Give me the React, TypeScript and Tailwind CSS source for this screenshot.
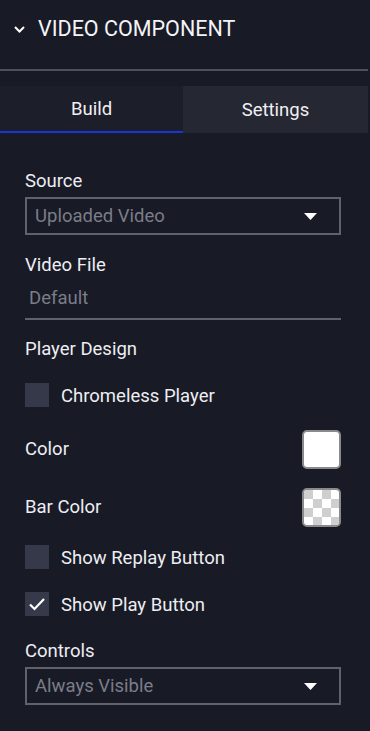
import React from "react";

function Caret() {
  return (
    <svg width="13" height="7" viewBox="0 0 13 7">
      <path d="M0 0 L13 0 L6.5 7 Z" fill="#ffffff" />
    </svg>
  );
}

function Select({ value }: { value: string }) {
  return (
    <div className="h-[38px] border-2 border-[#5f616b] flex items-center justify-between pl-[8px] pr-[22px]">
      <span className="text-[18.5px] text-[#7b7d88] mt-[2px]">{value}</span>
      <Caret />
    </div>
  );
}

function Checkbox({ checked, label }: { checked?: boolean; label: string }) {
  return (
    <div className="flex items-center h-[24px]">
      <div className="w-[24px] h-[24px] bg-[#363949] flex items-center justify-center">
        {checked && (
          <svg width="18" height="14" viewBox="0 0 18 14">
            <path d="M2 7.5 L6.5 12 L16 2" fill="none" stroke="#ffffff" strokeWidth="2.2" />
          </svg>
        )}
      </div>
      <span className="ml-[12px] text-[18.5px] text-[#eeeef2] mt-[3px]">{label}</span>
    </div>
  );
}

function Checker() {
  const cells = [];
  for (let r = 0; r < 5; r++) {
    for (let c = 0; c < 5; c++) {
      if ((r + c) % 2 === 0) cells.push(<rect key={`${r}-${c}`} x={c * 9} y={r * 9} width="9" height="9" fill="#cfcfcf" />);
    }
  }
  return (
    <div className="w-[39px] h-[39px] rounded-[5px] border-2 border-[#8a8a8a] overflow-hidden bg-white">
      <svg width="39" height="39" viewBox="0 0 39 39">{cells}</svg>
    </div>
  );
}

export default function App() {
  return (
    <div className="w-[370px] h-[731px] bg-[#181a26] overflow-hidden" style={{ fontFamily: "Roboto, 'Liberation Sans', sans-serif" }}>
      <div className="h-[69px] flex items-center pl-[14px] pr-[2px] pb-[11px]">
        <svg width="11" height="7" viewBox="0 0 11 7">
          <path d="M1 1 L5.5 5.5 L10 1" fill="none" stroke="#ffffff" strokeWidth="2" />
        </svg>
        <span className="ml-[13px] text-[21.5px] text-[#f4f4f6] mt-[1px]">VIDEO COMPONENT</span>
      </div>
      <div className="h-[2px] bg-[#4e5059] mr-[2px]" />
      <div className="mt-[15px] h-[47px] flex mr-[2px]">
        <div className="w-[183px] bg-[#1c1e2a] border-b-[2px] border-[#1736d6] flex items-center justify-center text-[18.5px] text-[#f0f0f3] pt-[3px]">
          Build
        </div>
        <div className="flex-1 bg-[#252733] flex items-center justify-center text-[18.5px] text-[#f0f0f3] pt-[3px]">
          Settings
        </div>
      </div>

      <div className="pl-[25px] pr-[29px] flex flex-col">
        <div className="mt-[38px] h-[20px] flex items-center text-[18.5px] text-[#eeeef2] pt-[2px]">Source</div>
        <div className="mt-[6px]">
          <Select value="Uploaded Video" />
        </div>
        <div className="mt-[20px] h-[20px] flex items-center text-[18.5px] text-[#eeeef2] pt-[2px]">Video File</div>
        <div className="mt-[1px] h-[44px] border-b-2 border-[#5f616b] flex items-center pl-[4px] pt-[4px] text-[18.5px] text-[#7b7d88]">
          Default
        </div>
        <div className="mt-[19px] h-[20px] flex items-center text-[18.5px] text-[#eeeef2] pt-[2px]">Player Design</div>
        <div className="mt-[24px]">
          <Checkbox label="Chromeless Player" />
        </div>
        <div className="mt-[23px] flex items-center justify-between">
          <span className="text-[18.5px] text-[#eeeef2]">Color</span>
          <div className="w-[39px] h-[39px] rounded-[5px] border-2 border-[#8a8a8a] bg-white" />
        </div>
        <div className="mt-[19px] flex items-center justify-between">
          <span className="text-[18.5px] text-[#eeeef2]">Bar Color</span>
          <Checker />
        </div>
        <div className="mt-[18px]">
          <Checkbox label="Show Replay Button" />
        </div>
        <div className="mt-[23px]">
          <Checkbox checked label="Show Play Button" />
        </div>
        <div className="mt-[25px] h-[20px] flex items-center text-[18.5px] text-[#eeeef2] pt-[2px]">Controls</div>
        <div className="mt-[6px]">
          <Select value="Always Visible" />
        </div>
      </div>
    </div>
  );
}
